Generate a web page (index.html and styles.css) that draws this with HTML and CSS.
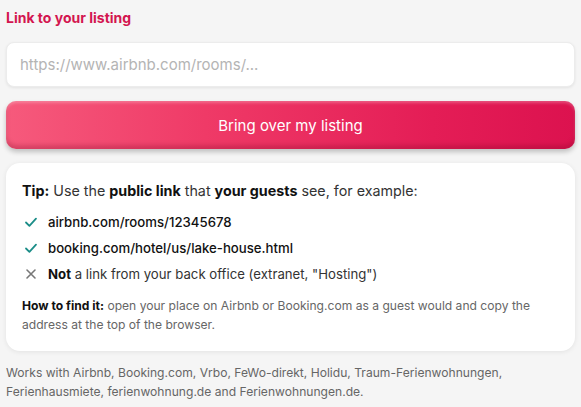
FILE: index.html
```html
<!DOCTYPE html>
<html lang="en">
<head>
<meta charset="utf-8">
<title>Link to your listing</title>
<link rel="stylesheet" href="styles.css">
</head>
<body>
<div class="page">
  <label class="title" for="url">Link to your listing</label>
  <input id="url" class="field" type="text" placeholder="https://www.airbnb.com/rooms/...">
  <button class="cta" type="button">Bring over my listing</button>
  <div class="card">
    <p class="tip"><b>Tip:</b> Use the <b>public link</b> that <b>your guests</b> see, for example:</p>
    <ul class="list">
      <li class="item">
        <svg class="ico ok" viewBox="0 0 14 14"><path d="M2 7.5 L5.4 10.8 L12 3.6" fill="none" stroke="currentColor" stroke-width="1.8" stroke-linecap="round" stroke-linejoin="round"/></svg>
        <span class="strong">airbnb.com/rooms/12345678</span>
      </li>
      <li class="item">
        <svg class="ico ok" viewBox="0 0 14 14"><path d="M2 7.5 L5.4 10.8 L12 3.6" fill="none" stroke="currentColor" stroke-width="1.8" stroke-linecap="round" stroke-linejoin="round"/></svg>
        <span class="strong">booking.com/hotel/us/lake-house.html</span>
      </li>
      <li class="item">
        <svg class="ico no" viewBox="0 0 14 14"><path d="M3 3 L11 11 M11 3 L3 11" fill="none" stroke="currentColor" stroke-width="1.6" stroke-linecap="round"/></svg>
        <span><b>Not</b> a link from your back office (extranet, "Hosting")</span>
      </li>
    </ul>
    <p class="how"><b>How to find it:</b> open your place on Airbnb or Booking.com as a guest would and copy the address at the top of the browser.</p>
  </div>
  <p class="foot">Works with Airbnb, Booking.com, Vrbo, FeWo-direkt, Holidu, Traum-Ferienwohnungen, Ferienhausmiete, ferienwohnung.de and Ferienwohnungen.de.</p>
</div>
</body>
</html>
```
FILE: styles.css
```css
html, body {
  margin: 0;
  padding: 0;
  background: #f5f5f5;
}
body {
  font-family: "Inter", "Noto Sans", sans-serif;
  color: #222;
}
.page {
  padding: 7px 6px 0 6px;
  display: flex;
  flex-direction: column;
}
.title {
  font-size: 14px;
  font-weight: 700;
  color: #d31650;
  line-height: 21px;
}
.field {
  margin-top: 14px;
  height: 45px;
  box-sizing: border-box;
  border: 1px solid #ececec;
  border-radius: 8px;
  background: #fff;
  box-shadow: 0 1px 3px rgba(0,0,0,0.08);
  padding: 0 13px;
  font-family: inherit;
  font-size: 15px;
  color: #222;
  outline: none;
}
.field::placeholder {
  color: #b4b4b4;
}
.cta {
  margin-top: 14px;
  height: 48px;
  border: none;
  border-radius: 10px;
  background: linear-gradient(90deg, #f65a7c 0%, #ef3a67 35%, #e41d56 75%, #dc124f 100%);
  color: #fff;
  font-family: inherit;
  font-size: 15px;
  box-shadow: inset 0 -4px 4px rgba(120,0,30,0.25), inset 0 2px 3px rgba(255,255,255,0.25), 0 3px 5px rgba(0,0,0,0.22);
}
.card {
  margin-top: 14px;
  background: #fff;
  border-radius: 14px;
  box-shadow: 0 1px 5px rgba(0,0,0,0.08);
  padding: 18px 16px 17px 16px;
}
.tip {
  margin: 0;
  font-size: 14.3px;
  line-height: 20px;
  color: #333;
}
.tip b, .item b, .how b {
  color: #111;
  font-weight: 700;
}
.list {
  list-style: none;
  margin: 11px 0 0 0;
  padding: 0;
  display: flex;
  flex-direction: column;
  gap: 6px;
}
.item {
  display: flex;
  align-items: center;
  gap: 10px;
  font-size: 13.2px;
  line-height: 20px;
  color: #333;
}
.strong {
  color: #111;
  font-weight: 500;
}
.ico {
  width: 14px;
  height: 14px;
  flex: none;
  margin-left: 2px;
}
.ok { color: #1b8d88; }
.no { color: #777; }
.how {
  margin: 12px 0 0 0;
  font-size: 12.1px;
  line-height: 19px;
  color: #666;
}
.foot {
  margin: 12px 0 0 0;
  font-size: 12.1px;
  line-height: 19px;
  color: #666;
}
```
